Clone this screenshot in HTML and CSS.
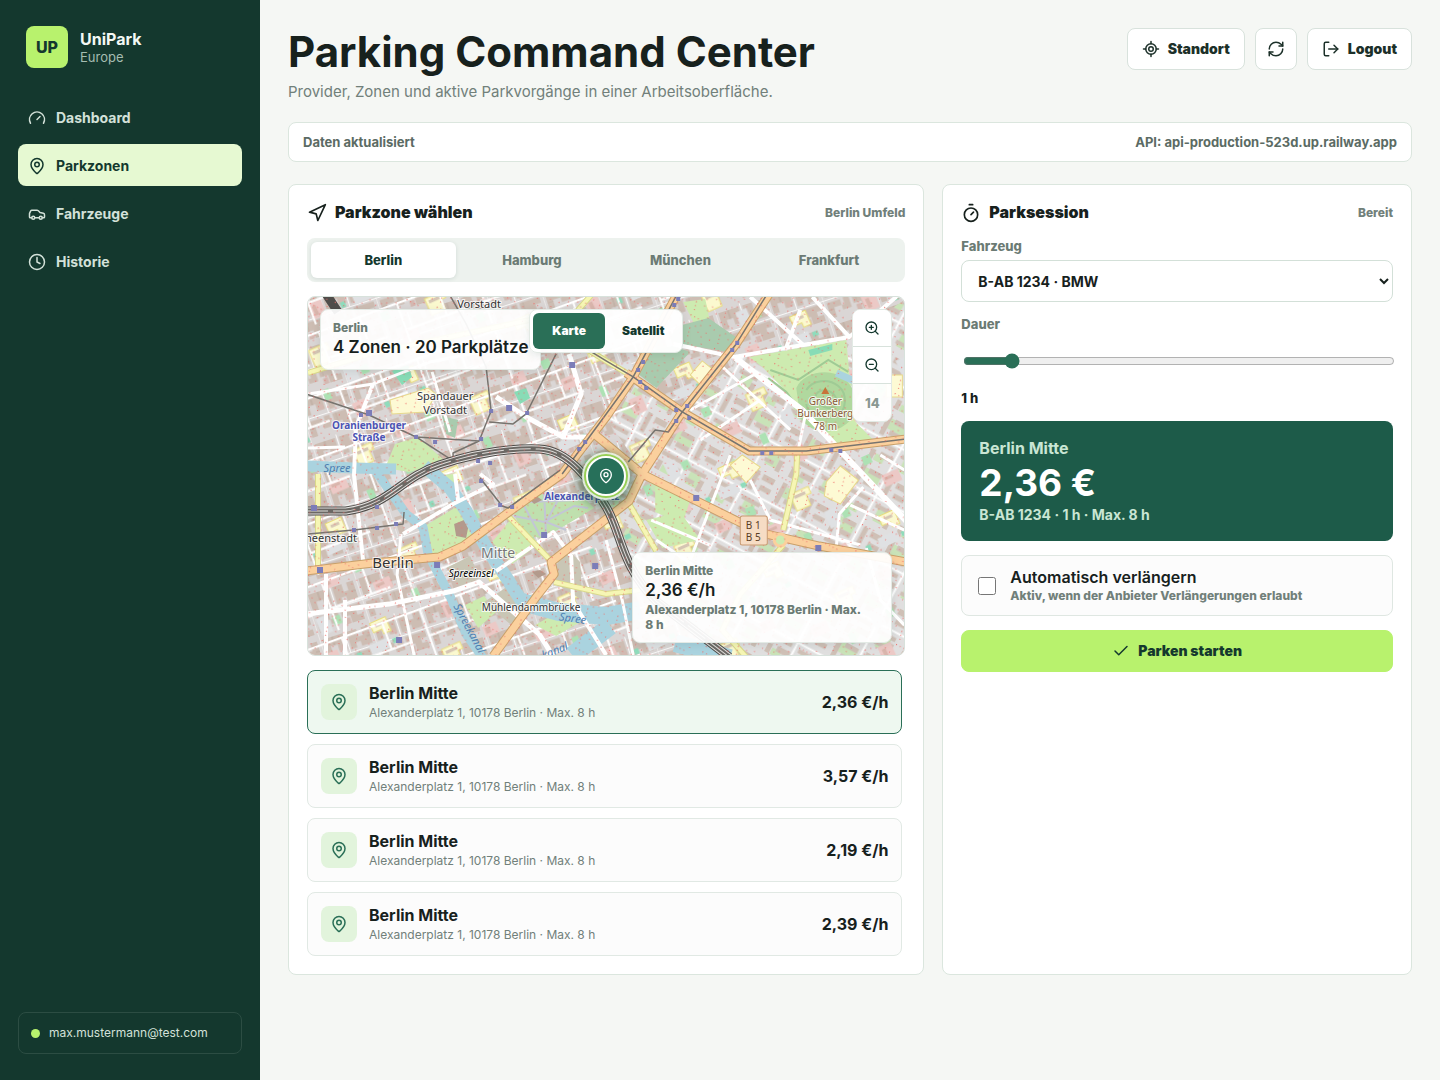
FILE: index.html
```html
<!DOCTYPE html>
<html lang="de">

<head>
    <meta charset="UTF-8">
    <meta name="viewport" content="width=device-width, initial-scale=1.0">
    <title>UniPark Europe</title>
    <link rel="stylesheet" href="styles.css">
</head>

<body>
    <!-- icon sprite -->
    <svg class="sprite" aria-hidden="true">
        <symbol id="i-pin" viewBox="0 0 24 24">
            <path d="M20 10c0 4.993-5.539 10.193-7.399 11.799a1 1 0 0 1-1.202 0C9.539 20.193 4 14.993 4 10a8 8 0 0 1 16 0" />
            <circle cx="12" cy="10" r="3" />
        </symbol>
        <symbol id="i-gauge" viewBox="0 0 24 24">
            <path d="m12 14 4-4" />
            <path d="M3.34 19a10 10 0 1 1 17.32 0" />
        </symbol>
        <symbol id="i-car" viewBox="0 0 24 24">
            <path d="M19 17h2c.6 0 1-.4 1-1v-3c0-.9-.7-1.7-1.5-1.9L16 10s-1.300-1.400-2.200-2.300c-.5-.4-1.100-.7-1.800-.7H5c-.6 0-1.100.4-1.400.9l-1.400 2.900A3.700 3.700 0 0 0 2 12v4c0 .6.4 1 1 1h2" />
            <circle cx="7" cy="17" r="2" />
            <path d="M9 17h6" />
            <circle cx="17" cy="17" r="2" />
        </symbol>
        <symbol id="i-clock" viewBox="0 0 24 24">
            <circle cx="12" cy="12" r="10" />
            <path d="M12 6v6l4 2" />
        </symbol>
        <symbol id="i-locate" viewBox="0 0 24 24">
            <path d="M2 12h3M19 12h3M12 2v3M12 19v3" />
            <circle cx="12" cy="12" r="7" />
            <circle cx="12" cy="12" r="3" />
        </symbol>
        <symbol id="i-refresh" viewBox="0 0 24 24">
            <path d="M3 12a9 9 0 0 1 9-9 9.750 9.750 0 0 1 6.740 2.740L21 8" />
            <path d="M21 3v5h-5" />
            <path d="M21 12a9 9 0 0 1-9 9 9.750 9.750 0 0 1-6.740-2.740L3 16" />
            <path d="M8 16H3v5" />
        </symbol>
        <symbol id="i-logout" viewBox="0 0 24 24">
            <path d="m16 17 5-5-5-5" />
            <path d="M21 12H9" />
            <path d="M9 21H5a2 2 0 0 1-2-2V5a2 2 0 0 1 2-2h4" />
        </symbol>
        <symbol id="i-nav" viewBox="0 0 24 24">
            <path d="M3 11 22 2l-9 19-2-8z" />
        </symbol>
        <symbol id="i-timer" viewBox="0 0 24 24">
            <path d="M10 2h4" />
            <path d="m12 14 3-3" />
            <circle cx="12" cy="14" r="8" />
        </symbol>
        <symbol id="i-zoom-in" viewBox="0 0 24 24">
            <circle cx="11" cy="11" r="8" />
            <path d="m21 21-4.350-4.350M11 8v6M8 11h6" />
        </symbol>
        <symbol id="i-zoom-out" viewBox="0 0 24 24">
            <circle cx="11" cy="11" r="8" />
            <path d="m21 21-4.350-4.350M8 11h6" />
        </symbol>
        <symbol id="i-check" viewBox="0 0 24 24">
            <path d="M20 6 9 17l-5-5" />
        </symbol>
    </svg>

    <div class="app">
        <aside class="sidebar">
            <div class="brand">
                <div class="brand-mark">UP</div>
                <div>
                    <strong>UniPark</strong>
                    <span>Europe</span>
                </div>
            </div>
            <nav class="nav">
                <button type="button" class="nav-item"><svg class="icon"><use href="#i-gauge" /></svg>Dashboard</button>
                <button type="button" class="nav-item active"><svg class="icon"><use href="#i-pin" /></svg>Parkzonen</button>
                <button type="button" class="nav-item"><svg class="icon"><use href="#i-car" /></svg>Fahrzeuge</button>
                <button type="button" class="nav-item"><svg class="icon"><use href="#i-clock" /></svg>Historie</button>
            </nav>
            <div class="account">
                <span class="dot"></span>
                <span>max.mustermann@test.com</span>
            </div>
        </aside>

        <main class="main">
            <header class="topbar">
                <div>
                    <h1>Parking Command Center</h1>
                    <p>Provider, Zonen und aktive Parkvorgänge in einer Arbeitsoberfläche.</p>
                </div>
                <div class="actions">
                    <button type="button" class="button"><svg class="icon"><use href="#i-locate" /></svg>Standort</button>
                    <button type="button" class="button button-icon" aria-label="Aktualisieren"><svg class="icon"><use href="#i-refresh" /></svg></button>
                    <button type="button" class="button"><svg class="icon"><use href="#i-logout" /></svg>Logout</button>
                </div>
            </header>

            <div class="status">
                <span>Daten aktualisiert</span>
                <span>API: api-production-523d.up.railway.app</span>
            </div>

            <div class="workspace">
                <section class="panel">
                    <div class="panel-head">
                        <h2><svg class="icon icon-lg"><use href="#i-nav" /></svg>Parkzone wählen</h2>
                        <span>Berlin Umfeld</span>
                    </div>
                    <div class="tabs">
                        <button type="button" class="tab active">Berlin</button>
                        <button type="button" class="tab">Hamburg</button>
                        <button type="button" class="tab">München</button>
                        <button type="button" class="tab">Frankfurt</button>
                    </div>

                    <div class="map">
                        <svg class="map-canvas" viewBox="308 297 596 358" preserveAspectRatio="xMidYMid slice">
                            <defs>
                                <pattern id="houses" width="53" height="47" patternUnits="userSpaceOnUse" patternTransform="rotate(-18)">
                                    <rect width="53" height="47" fill="#dad6d5" />
                                    <path fill="#cdbdb3" d="M3 3h21v16h-8v-7H9v9H3zM28 3h10v8h5V3h7v18H39v-5h-5v5h-6zM3 27h14v6H9v10H3zM20 26h6v12h-9v-5h3zM29 26h21v6h-6v5h6v6H37v-8h-8z" />
                                    <path fill="#d4b9b2" d="M31 37h5v6h-5zM18 14h5v5h-5z" />
                                    <path fill="#c3b3a8" d="M12 3h2v9h-2zM46 12h4v2h-4zM3 34h6v1H3zM32 26h1v9h-1z" />
                                    <path d="M0 0v47M0 24h53M26 0v24" stroke="#f8f7f6" stroke-width="1" />
                                </pattern>
                                <pattern id="slabs" width="61" height="55" patternUnits="userSpaceOnUse" patternTransform="rotate(28)">
                                    <rect width="61" height="55" fill="#e0dfdf" />
                                    <path fill="#c9e3b8" d="M8 6h18v11H8zM38 36h12v14H38zM10 44h10v7H10z" />
                                    <path fill="#cfc0b6" d="M3 3h5v22H3zM12 5h14v5H12zM12 17h14v5H12zM34 4h5v21h-5zM43 5h13v6H43zM45 16h12v5H45zM4 31h22v4H4zM4 41h5v10H4zM14 40h14v6H14zM34 33h20v4H34zM50 40h5v12h-5zM36 44h10v4H36z" />
                                    <path d="M30 0v55M0 28h61" stroke="#fff" stroke-width="2" />
                                </pattern>
                                <pattern id="patches" width="127" height="109" patternUnits="userSpaceOnUse" patternTransform="rotate(-24)">
                                    <path fill="#fbf9cf" stroke="#e9dd7c" stroke-width="1" d="M12 10h20v7h-5v11H12zM84 66h17v15h-8v-5h-9z" />
                                    <path fill="#ecc9c6" d="M58 6h15v11H58zM103 30h18v12h-18zM30 76h14v17H30z" />
                                    <path fill="#ade2b4" d="M92 5h9v9h-9zM52 45h8v9h-8zM8 52h7v11H8z" />
                                    <path fill="#dfe1e3" d="M36 40h12v18H36zM74 86h21v10H74z" />
                                    <path fill="#d9b5ac" d="M60 8h5v6h-5zM105 33h9v3h-9zM33 80h4v10h-4z" />
                                    <path fill="#d6c6b4" d="M15 13h12v3H15zM88 69h9v3h-9z" />
                                    <path fill="#8fdcbc" d="M98 89h6v5h-6zM60 88h5v6h-5z" />
                                </pattern>
                                <pattern id="streets" width="83" height="59" patternUnits="userSpaceOnUse" patternTransform="rotate(-20)">
                                    <path d="M0 8h83M20 8v51M63 8v28M20 36h63" fill="none" stroke="#fff" stroke-width="2" />
                                </pattern>
                                <pattern id="dots" width="31" height="27" patternUnits="userSpaceOnUse" patternTransform="rotate(14)">
                                    <path fill="#ee6f6a" d="M2 3h1v1H2zM6 4h1v1H6zM10 5h1v1h-1zM14 6h1v1h-1zM19 2h1v1h-1zM23 9h1v1h-1zM28 12h1v1h-1zM4 16h1v1H4zM4 20h1v1H4zM4 24h1v1H4zM13 18h1v1h-1zM17 22h1v1h-1zM26 23h1v1h-1zM14 11h1v1h-1zM21 17h1v1h-1zM9 13h1v1H9z" />
                                </pattern>
                            </defs>

                            <rect x="308" y="297" width="596" height="358" fill="url(#houses)" />
                            <path fill="url(#slabs)" d="M633 377 682 412 749 451 904 439V655H730L640 590 606 510 642 470 606 419zM740 357 849 337 904 300V439L749 451 682 412z" />
                            <rect x="308" y="297" width="596" height="358" fill="url(#patches)" />
                            <path fill="url(#streets)" d="M308 297H690L640 400 560 475 640 655H308z" />

                            <!-- parks -->
                            <g fill="#cdebb0">
                                <path d="M749 357 846 340 853 420 877 444 840 448 806 412 762 367z" />
                                <path d="M395 444 418 437 446 462 409 472 385 468zM425 476 455 474 458 492 446 488z" />
                                <path d="M423 527 456 507 476 538 448 553 431 554zM492 542 510 520 536 546 512 564z" />
                                <path d="M683 302 705 299 709 318 694 324zM566 330 582 326 588 340 574 346zM646 520 680 512 700 540 662 548z" />
                                <path d="M535 625 565 608 580 622 556 636zM465 605 484 596 496 612 478 628zM655 480 690 500 682 524 655 512z" />
                            </g>
                            <g fill="#a9cbae">
                                <path d="M682 325 708 318 737 338 728 352 681 344 668 338zM646 352 672 346 690 352 656 388 638 374z" />
                                <path d="M442 416 458 420 455 438 446 434z" />
                            </g>
                            <path fill="#b0d89e" d="M796 388c6-14 28-20 44-12s22 36 6 48-34 10-46-6z" />
                            <path fill="none" stroke="#9fcb95" stroke-width="2" d="M806 390c6-10 22-12 32-4s8 26-2 30-30-2-30-12M816 394c4-5 12-5 17 0s4 14-3 14-18-6-14-14M770 370l28 10 30-20 20 12M800 410l-14-18-18-14" />
                            <path fill="#88dcb6" d="M392 371l16-6 4 12-10 8zM514 392l12-4 4 10-10 6zM808 350l24-6v6l-22 6z" />
                            <path fill="#c9c6b5" d="M566 548l14 14 2 38-26-16 2-24zM446 568l24-12 10 22-20 8zM484 602l24-16 22 24-20 14z" />
                            <path fill="#fdfad4" stroke="#e8d98c" d="M390 400l38-12 8 6-10 18-34 2zM826 482l14-16 18 14-18 24-16-8zM730 465l12-10 18 12-14 16zM690 375l12-14 10 8-12 16zM886 375h16v22h-16z" />
                            <!-- gardens below the tower -->
                            <path fill="#bfe0ae" d="M514 514l24-20 44 2 12 12-50 30-20-2z" />
                            <path fill="none" stroke="#c3c6d6" stroke-width="2" d="M514 516l30 6 30-16 14 2M524 506l16 30M544 494l2 44M560 496l-14 26 20 8M530 502l48-2" />
                            <path fill="#b39a8c" d="M454 524l10-4 4 8-2 10-10-2zM528 498l8-2 6 4-8 4zM532 572l8-2 6 4-8 4z" />

                            <!-- Spree and Spreekanal -->
                            <g fill="none" stroke="#aad3df" stroke-linejoin="round">
                                <path d="M306 466 353 468 396 469" stroke-width="11" />
                                <path d="M372 466 406 514 423 527 428 554 449 594 466 634 483 658" stroke-width="9" />
                                <path d="M424 466 450 488 466 511 486 547 506 577 522 602" stroke-width="13" />
                                <path d="M519 601 559 612 606 616 640 610M572 655 610 626M675 643 730 658" stroke-width="18" />
                                <path d="M836 373l18 8" stroke-width="7" />
                            </g>

                            <!-- side streets -->
                            <g fill="none" stroke="#fff" stroke-width="4" stroke-linejoin="round">
                                <path d="M373 384 356 427 354 475 363 560M326 574V656M345 600V655" />
                                <path d="M306 614 389 604 453 591 479 582 539 634 553 656" stroke-width="5" />
                                <path d="M403 534 453 504 493 484 480 474M455 474 458 500M496 571 553 532 571 556 573 602 606 655" />
                                <path d="M496 397 526 417 563 437 586 437M569 354 581 394 563 437" stroke-width="5" />
                                <path d="M308 394 373 384 430 362 490 350M308 448 345 447M432 372 450 432M401 534 397 575 414 655" stroke-width="3" />
                                <path d="M673 344 734 357 849 337 904 290M849 337 812 297M750 297 803 345M785 350 800 310" />
                                <path d="M734 357 803 411 843 454 906 521" stroke-width="6" />
                                <path d="M805 415 797 455M863 487 839 514 836 547M690 410 755 374M700 440 760 400M720 365 790 430M651 520 710 545M690 560 730 455M750 480 770 520 860 545M850 505 904 530M880 455 904 470" stroke-width="3" />
                                <path d="M606 540 622 600 633 655M656 540 700 570M866 548 880 600 904 625" stroke-width="3" />
                            </g>

                            <!-- secondary roads -->
                            <g fill="none" stroke="#d9d98b" stroke-width="6">
                                <path d="M318 474V571M308 373 370 354 530 320M592 294 566 324M565 336 606 361 633 377M508 516 551 561M554 582 606 594 640 590" />
                                <path d="M797 451 796 474 783 530M629 504 656 551M783 545 740 594 722 630 746 657" />
                            </g>
                            <g fill="none" stroke="#f6f6b4" stroke-width="4">
                                <path d="M318 474V571M308 373 370 354 530 320M592 294 566 324M565 336 606 361 633 377M508 516 551 561M554 582 606 594 640 590" />
                                <path d="M797 451 796 474 783 530M629 504 656 551M783 545 740 594 722 630 746 657" />
                            </g>

                            <!-- main roads -->
                            <g fill="none" stroke="#c9a06a" stroke-width="9" stroke-linejoin="round">
                                <path d="M306 571 373 563 439 557 463 546 506 514 562 474 606 417 633 377 677 294M642 474 682 412 736 344 769 294M626 373 682 412 749 451 806 451 906 439" />
                                <path d="M594 434 642 474 739 522 766 534 819 546 906 562M642 474 629 501 606 519 551 562 554 574 536 597 493 656" />
                            </g>
                            <g fill="none" stroke="#fbd09d" stroke-width="7" stroke-linejoin="round">
                                <path d="M306 571 373 563 439 557 463 546 506 514 562 474 606 417 633 377 677 294M642 474 682 412 736 344 769 294M626 373 682 412 749 451 806 451 906 439" />
                                <path d="M594 434 642 474 739 522 766 534 819 546 906 562M642 474 629 501 606 519 551 562 554 574 536 597 493 656" />
                            </g>
                            <circle cx="780" cy="540" r="6" fill="#cdebb0" stroke="#fbd09d" stroke-width="3" />

                            <!-- tram tracks -->
                            <g fill="none" stroke="#77746f" stroke-width="1.500" stroke-linejoin="round">
                                <path d="M306 394 369 415 416 437 479 441 491 411 486 367 466 324 449 294M416 437 453 461 453 453 479 441" />
                                <path d="M556 354 526 414 513 424 489 422M565 336 606 361 633 377 682 412 749 451 806 451 906 439M562 474 606 414 633 377 677 294" />
                                <path d="M628 462 655 430 668 432 682 412 736 344 767 294M308 534 354 530 403 524 404 512M480 478 502 506 508 508 560 470" />
                            </g>

                            <!-- railway -->
                            <g fill="none">
                                <path d="M306 511 346 511C390 505 400 478 439 465S510 448 539 449 590 480 606 507 620 565 656 601L729 657M326 294 338 312" stroke="#4f4d4a" stroke-width="9" />
                                <path d="M306 511 346 511C390 505 400 478 439 465S510 448 539 449 590 480 606 507 620 565 656 601L729 657" stroke="#e4e2e0" stroke-width="7" />
                                <path d="M306 511 346 511C390 505 400 478 439 465S510 448 539 449 590 480 606 507 620 565 656 601L729 657" stroke="#6b6864" stroke-width="5" />
                                <path d="M306 511 346 511C390 505 400 478 439 465S510 448 539 449 590 480 606 507 620 565 656 601L729 657" stroke="#dddbd8" stroke-width="1" stroke-dasharray="22 5" />
                            </g>

                            <rect x="308" y="297" width="596" height="358" fill="url(#dots)" />

                            <!-- stops -->
                            <g fill="#7c7db8">
                                <path d="M366 410h6v6h-6zM506 405h6v6h-6zM569 362h6v6h-6zM434 562h6v6h-6zM317 567h6v6h-6zM396 637h6v6h-6zM541 532h6v6h-6zM592 563h6v6h-6zM693 495h6v6h-6zM311 505h6v6h-6zM815 545h6v6h-6z" />
                                <path d="M359 413h4v4h-4zM414 435h4v4h-4zM433 440h4v4h-4zM479 437h4v4h-4zM489 409h4v4h-4zM525 411h4v4h-4zM476 459h4v4h-4zM488 461h4v4h-4zM352 528h4v4h-4zM375 526h4v4h-4zM394 522h4v4h-4zM375 505h4v4h-4zM479 479h4v4h-4zM498 503h4v4h-4zM510 505h4v4h-4zM583 440h4v4h-4zM577 447h4v4h-4z" />
                                <path d="M672 303h4v4h-4zM676 297h4v4h-4zM735 341h4v4h-4zM730 348h4v4h-4zM641 360h4v4h-4zM636 368h4v4h-4zM638 380h4v4h-4zM644 386h4v4h-4zM674 408h4v4h-4zM685 404h4v4h-4zM687 416h4v4h-4zM674 419h4v4h-4zM760 451h4v4h-4zM769 451h4v4h-4zM829 448h4v4h-4zM838 449h4v4h-4z" />
                            </g>
                            <path d="M825 387l4 7h-8z" fill="#c8733a" />

                            <rect x="740" y="516" width="27" height="29" rx="2" fill="#f6dcc4" stroke="#c99a72" />
                            <g class="map-labels">
                                <text x="479" y="308">Vorstadt</text>
                                <text x="445" y="400">Spandauer</text>
                                <text x="445" y="414">Vorstadt</text>
                                <text x="369" y="429" class="station">Oranienburger</text>
                                <text x="369" y="441" class="station">Straße</text>
                                <text x="544" y="500" class="station start">Alexanderplatz</text>
                                <text x="337" y="472" class="water">Spree</text>
                                <text x="572" y="622" class="water" transform="rotate(8 572 622)">Spree</text>
                                <text x="466" y="630" class="water" transform="rotate(62 466 630)">Spreekanal</text>
                                <text x="556" y="654" class="water" transform="rotate(-22 556 654)">kanal</text>
                                <text x="331" y="542">heenstadt</text>
                                <text x="393" y="568" class="city">Berlin</text>
                                <text x="498" y="558" class="district">Mitte</text>
                                <text x="471" y="577" class="island">Spreeinsel</text>
                                <text x="531" y="611" class="bridge">Mühlendammbrücke</text>
                                <text x="825" y="405" class="hill">Großer</text>
                                <text x="825" y="417" class="hill">Bunkerberg</text>
                                <text x="825" y="430" class="hill">78 m</text>
                                <text x="753" y="529" class="ref">B 1</text>
                                <text x="753" y="541" class="ref">B 5</text>
                            </g>
                        </svg>

                        <button type="button" class="map-marker" aria-label="Berlin Mitte"><svg class="icon icon-sm"><use href="#i-pin" /></svg></button>
                        <div class="map-card map-summary">
                            <span>Berlin</span>
                            <strong>4 Zonen · 20 Parkplätze</strong>
                        </div>
                        <div class="map-toggle">
                            <button type="button" class="active">Karte</button>
                            <button type="button">Satellit</button>
                        </div>
                        <div class="map-zoom">
                            <button type="button" aria-label="Vergrößern"><svg class="icon icon-sm"><use href="#i-zoom-in" /></svg></button>
                            <button type="button" aria-label="Verkleinern"><svg class="icon icon-sm"><use href="#i-zoom-out" /></svg></button>
                            <span>14</span>
                        </div>
                        <div class="map-card map-detail">
                            <span>Berlin Mitte</span>
                            <strong>2,36 €/h</strong>
                            <small>Alexanderplatz 1, 10178 Berlin · Max. 8&nbsp;h</small>
                        </div>
                    </div>

                    <div class="zones">
                        <button type="button" class="zone active">
                            <span class="zone-icon"><svg class="icon"><use href="#i-pin" /></svg></span>
                            <span class="zone-text"><strong>Berlin Mitte</strong><small>Alexanderplatz 1, 10178 Berlin · Max. 8 h</small></span>
                            <b>2,36 €/h</b>
                        </button>
                        <button type="button" class="zone">
                            <span class="zone-icon"><svg class="icon"><use href="#i-pin" /></svg></span>
                            <span class="zone-text"><strong>Berlin Mitte</strong><small>Alexanderplatz 1, 10178 Berlin · Max. 8 h</small></span>
                            <b>3,57 €/h</b>
                        </button>
                        <button type="button" class="zone">
                            <span class="zone-icon"><svg class="icon"><use href="#i-pin" /></svg></span>
                            <span class="zone-text"><strong>Berlin Mitte</strong><small>Alexanderplatz 1, 10178 Berlin · Max. 8 h</small></span>
                            <b>2,19 €/h</b>
                        </button>
                        <button type="button" class="zone">
                            <span class="zone-icon"><svg class="icon"><use href="#i-pin" /></svg></span>
                            <span class="zone-text"><strong>Berlin Mitte</strong><small>Alexanderplatz 1, 10178 Berlin · Max. 8 h</small></span>
                            <b>2,39 €/h</b>
                        </button>
                    </div>
                </section>

                <section class="panel">
                    <div class="panel-head">
                        <h2><svg class="icon icon-lg"><use href="#i-timer" /></svg>Parksession</h2>
                        <span>Bereit</span>
                    </div>
                    <form class="session">
                        <div class="field">
                            <label for="vehicle">Fahrzeug</label>
                            <select id="vehicle">
                                <option>B-AB 1234 · BMW</option>
                            </select>
                        </div>
                        <div class="field">
                            <label for="duration">Dauer</label>
                            <input type="range" id="duration" min="15" max="480" step="15" value="60">
                            <output for="duration">1 h</output>
                        </div>
                        <div class="quote">
                            <span>Berlin Mitte</span>
                            <strong>2,36 €</strong>
                            <small>B-AB 1234 · 1 h · Max. 8 h</small>
                        </div>
                        <label class="extend" for="extend">
                            <input type="checkbox" id="extend">
                            <span>
                                <strong>Automatisch verlängern</strong>
                                <small>Aktiv, wenn der Anbieter Verlängerungen erlaubt</small>
                            </span>
                        </label>
                        <button type="button" class="button button-primary"><svg class="icon"><use href="#i-check" /></svg>Parken starten</button>
                    </form>
                </section>
            </div>
        </main>
    </div>
</body>

</html>
```
FILE: styles.css
```css
* {
    box-sizing: border-box;
}

body {
    margin: 0;
    background: #f5f7f4;
    color: #17211d;
    font-family: Inter, "Liberation Sans", sans-serif;
    font-size: 16px;
    line-height: 20px;
}

button,
input,
select {
    font: inherit;
    color: inherit;
}

button {
    cursor: pointer;
}

.sprite {
    position: absolute;
    width: 0;
    height: 0;
}

.icon {
    width: 18px;
    height: 18px;
    flex: none;
    fill: none;
    stroke: currentColor;
    stroke-width: 2;
    stroke-linecap: round;
    stroke-linejoin: round;
}

.icon-lg {
    width: 20px;
    height: 20px;
}

.icon-sm {
    width: 16px;
    height: 16px;
}

.app {
    display: grid;
    grid-template-columns: 260px minmax(0, 1fr);
    min-height: 100vh;
}

/* sidebar */
.sidebar {
    display: flex;
    flex-direction: column;
    gap: 28px;
    padding: 26px 18px;
    background: #14382e;
    color: #fff;
}

.brand {
    display: flex;
    align-items: center;
    gap: 12px;
    padding: 0 8px;
}

.brand-mark {
    display: grid;
    place-items: center;
    width: 42px;
    height: 42px;
    border-radius: 8px;
    background: #b8f26d;
    color: #14382e;
    font-weight: 800;
}

.brand strong,
.brand span {
    display: block;
}

.brand strong {
    font-weight: 700;
    line-height: 19px;
    color: #f3f8f4;
}

.brand span {
    font-size: 13px;
    line-height: 16px;
    color: #a5bdb1;
}

.nav {
    display: grid;
    gap: 6px;
}

.nav-item {
    display: flex;
    align-items: center;
    gap: 10px;
    height: 42px;
    padding: 1px 10px 0;
    border: 0;
    border-radius: 8px;
    background: transparent;
    color: #d3e1d9;
    font-size: 14px;
    font-weight: 700;
}

.nav-item.active {
    background: #e6f9d2;
    color: #14382e;
}

.account {
    display: flex;
    align-items: center;
    gap: 9px;
    height: 42px;
    margin-top: auto;
    padding: 0 12px;
    border: 1px solid #2c4d43;
    border-radius: 8px;
    color: #d3e1d9;
    font-size: 12px;
}

.dot {
    width: 9px;
    height: 9px;
    border-radius: 50%;
    background: #b8f26d;
}

/* header */
.main {
    padding: 28px;
}

.topbar {
    display: flex;
    justify-content: space-between;
    align-items: flex-start;
    gap: 20px;
    margin-bottom: 20px;
}

.topbar h1 {
    margin: 0;
    font-size: 42px;
    line-height: 48px;
    font-weight: 700;
}

.topbar p {
    margin: 6px 0 0;
    color: #71807a;
    font-size: 15px;
}

.actions {
    display: flex;
    gap: 10px;
}

.button {
    display: inline-flex;
    align-items: center;
    justify-content: center;
    gap: 8px;
    height: 42px;
    padding: 0 14px;
    border: 1px solid #d8e2dc;
    border-radius: 8px;
    background: #fff;
    color: #1c3029;
    font-size: 14px;
    font-weight: 900;
}

.button-icon {
    width: 42px;
    padding: 0;
}

.button-primary {
    border-color: #b8f26d;
    background: #b8f26d;
    color: #14382e;
}

.status {
    display: flex;
    justify-content: space-between;
    align-items: center;
    height: 40px;
    margin-bottom: 22px;
    padding: 0 14px;
    border: 1px solid #dbe6de;
    border-radius: 8px;
    background: #fff;
    color: #5b6b64;
    font-size: 13px;
    font-weight: 700;
}

/* panels */
.workspace {
    display: grid;
    grid-template-columns: minmax(0, 1.355fr) minmax(0, 1fr);
    gap: 18px;
}

.panel {
    padding: 18px;
    border: 1px solid #dbe6de;
    border-radius: 8px;
    background: #fff;
}

.panel-head {
    display: flex;
    justify-content: space-between;
    align-items: center;
    margin-bottom: 16px;
}

.panel-head h2 {
    display: flex;
    align-items: center;
    gap: 8px;
    height: 19px;
    margin: 0;
    font-size: 16px;
    line-height: 19px;
    font-weight: 900;
}

.panel-head span {
    color: #71807a;
    font-size: 12px;
    line-height: 19px;
    font-weight: 800;
}

.tabs {
    display: grid;
    grid-template-columns: repeat(4, 1fr);
    gap: 4px;
    margin-bottom: 14px;
    padding: 4px;
    border-radius: 8px;
    background: #edf2ee;
}

.tab {
    height: 36px;
    border: 0;
    border-radius: 6px;
    background: transparent;
    color: #6b7b74;
    font-size: 13px;
    font-weight: 800;
}

.tab.active {
    background: #fff;
    color: #14382e;
    box-shadow: 0 1px 4px rgba(20, 56, 46, 0.12);
}

/* map */
.map {
    position: relative;
    height: 360px;
    margin-bottom: 14px;
    overflow: hidden;
    border: 1px solid #d8e2dc;
    border-radius: 8px;
}

.map-canvas {
    display: block;
    width: 100%;
    height: 100%;
}

.map-labels {
    font-family: "Noto Sans", sans-serif;
    font-size: 11px;
    text-anchor: middle;
    fill: #333;
    stroke: rgba(255, 255, 255, 0.8);
    stroke-width: 2px;
    paint-order: stroke;
}

.map-labels .station {
    font-size: 10px;
    font-weight: 700;
    fill: #4c54b4;
}

.map-labels .start {
    text-anchor: start;
}

.map-labels .water {
    font-style: italic;
    fill: #4d80b3;
    stroke: none;
}

.map-labels .city {
    font-size: 15px;
}

.map-labels .district {
    font-size: 14px;
    fill: #777;
}

.map-labels .island {
    font-size: 10px;
    font-style: italic;
    fill: #000;
}

.map-labels .bridge {
    font-size: 10px;
}

.map-labels .hill {
    font-size: 10px;
    fill: #8a5a35;
}

.map-labels .ref {
    font-size: 10px;
    fill: #5a3d24;
    stroke: none;
}

.map-marker {
    position: absolute;
    top: 50%;
    left: 50%;
    display: grid;
    place-items: center;
    width: 40px;
    height: 40px;
    padding: 0;
    border: 2px solid #fff;
    border-radius: 50%;
    background: #27705a;
    color: #fff;
    transform: translate(-50%, -50%);
    box-shadow: 0 0 0 2px #97cf56, 0 0 0 4px rgba(236, 245, 232, 0.9), 0 4px 12px 8px rgba(30, 80, 50, 0.55);
}

.map-card {
    position: absolute;
    padding: 10px 12px;
    border: 1px solid #e3eae5;
    border-radius: 8px;
    background: rgba(255, 255, 255, 0.93);
    box-shadow: 0 2px 8px rgba(20, 56, 46, 0.1);
    color: #6b7b74;
    font-size: 12px;
    line-height: 15px;
    font-weight: 800;
}

.map-card span,
.map-card strong,
.map-card small {
    display: block;
}

.map-card strong {
    color: #17211d;
    font-size: 17px;
    line-height: 24px;
    font-weight: 600;
}

.map-card small {
    font-size: 12px;
}

.map-summary {
    top: 12px;
    left: 12px;
}

.map-detail {
    right: 12px;
    bottom: 12px;
    width: 260px;
}

.map-toggle {
    position: absolute;
    top: 12px;
    left: 50%;
    display: flex;
    gap: 2px;
    padding: 3px;
    border: 1px solid #e3eae5;
    border-radius: 8px;
    background: rgba(255, 255, 255, 0.96);
    transform: translateX(-50%);
    box-shadow: 0 2px 8px rgba(20, 56, 46, 0.1);
}

.map-toggle button {
    min-width: 72px;
    height: 36px;
    padding: 0 14px;
    border: 0;
    border-radius: 6px;
    background: transparent;
    color: #14382e;
    font-size: 12px;
    font-weight: 900;
}

.map-toggle .active {
    background: #2a6f57;
    color: #fff;
}

.map-zoom {
    position: absolute;
    top: 12px;
    right: 12px;
    display: grid;
    width: 40px;
    overflow: hidden;
    border: 1px solid #e3eae5;
    border-radius: 8px;
    background: rgba(255, 255, 255, 0.94);
}

.map-zoom button,
.map-zoom span {
    display: grid;
    place-items: center;
    height: 37px;
    padding: 0;
    border: 0;
    border-bottom: 1px solid #d8e2dc;
    background: #fff;
    color: #14382e;
}

.map-zoom span {
    border: 0;
    background: transparent;
    color: #8a9892;
    font-size: 13px;
    font-weight: 800;
}

/* zone list */
.zones {
    display: grid;
    gap: 10px;
    padding-right: 3px;
}

.zone {
    display: flex;
    align-items: center;
    gap: 12px;
    height: 64px;
    padding: 0 13px;
    border: 1px solid #e1e9e4;
    border-radius: 8px;
    background: #fcfcfc;
    text-align: left;
}

.zone.active {
    border-color: #2a6f57;
    background: #eef8f0;
}

.zone-icon {
    display: grid;
    place-items: center;
    width: 36px;
    height: 36px;
    border-radius: 8px;
    background: #e2f4dc;
    color: #2a6f57;
}

.zone-text {
    flex: 1;
    padding-top: 2px;
}

.zone strong,
.zone small {
    display: block;
}

.zone strong,
.zone b {
    font-weight: 700;
}

.zone small {
    color: #71807a;
    font-size: 12px;
}

/* session form */
.session {
    display: grid;
    gap: 14px;
}

.field {
    display: grid;
    gap: 6px;
}

.field label {
    color: #6b7b74;
    font-size: 13px;
    line-height: 16px;
    font-weight: 800;
}

.field select {
    width: 100%;
    height: 42px;
    padding: 0 12px;
    border: 1px solid #d3e0d8;
    border-radius: 8px;
    background: #fff;
    font-size: 14px;
    font-weight: 700;
}

.field input {
    width: 100%;
    height: 42px;
    margin: 2px;
    accent-color: #2a6f57;
}

.field output {
    font-size: 13px;
    line-height: 17px;
    font-weight: 800;
}

.quote {
    padding: 18px;
    border-radius: 8px;
    background: #1d5b49;
    color: #c9e6d4;
    font-weight: 700;
}

.quote span,
.quote strong,
.quote small {
    display: block;
}

.quote span {
    line-height: 19px;
}

.quote strong {
    color: #fff;
    font-size: 37px;
    line-height: 49px;
    font-weight: 700;
}

.quote small {
    font-size: 14px;
    line-height: 16px;
}

.extend {
    display: flex;
    align-items: center;
    gap: 14px;
    padding: 11px 16px;
    border: 1px solid #dfe7e2;
    border-radius: 8px;
    background: #fcfcfc;
}

.extend input {
    width: 18px;
    height: 18px;
    margin: 0;
}

.extend strong,
.extend small {
    display: block;
}

.extend strong {
    font-weight: 600;
}

.extend small {
    color: #71807a;
    font-size: 12px;
    line-height: 17px;
    font-weight: 800;
}
```
